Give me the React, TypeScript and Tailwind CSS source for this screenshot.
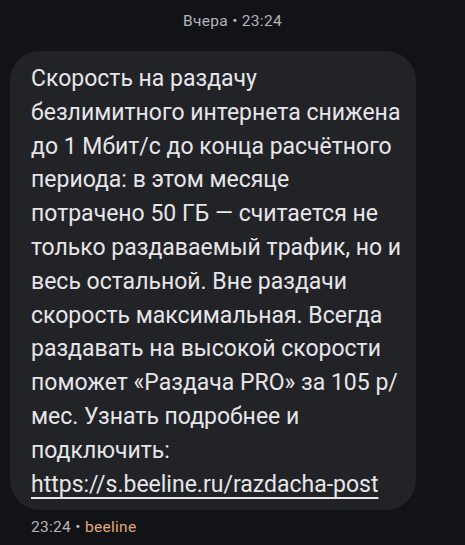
import React from 'react'

const lines = [
    'Скорость на раздачу',
    'безлимитного интернета снижена',
    'до 1 Мбит/с до конца расчётного',
    'периода: в этом месяце',
    'потрачено 50 ГБ — считается не',
    'только раздаваемый трафик, но и',
    'весь остальной. Вне раздачи',
    'скорость максимальная. Всегда',
    'раздавать на высокой скорости',
    'поможет «Раздача PRO» за 105 р/',
    'мес. Узнать подробнее и',
    'подключить:',
]

export default function App() {
    return (
        <div className="w-[465px] h-[545px] bg-[#121317] font-['Roboto',sans-serif] overflow-hidden">
            <div className="pt-[11px] pb-[20px] text-center text-[15.5px] tracking-[0.3px] leading-[20px] text-[#b4b5bc]">
                Вчера • 23:24
            </div>
            <div className="ml-[10px] w-[406px] rounded-[30px] bg-[#222327] pl-[21px] pr-[16px] pt-[11px] pb-[9px] text-[23px] leading-[33.8px] text-[#e6e6ea]">
                {lines.map((l, i) => (
                    <div key={i} className="whitespace-nowrap">{l}</div>
                ))}
                <div className="whitespace-nowrap underline decoration-[2px] underline-offset-[5px]">
                    https://s.beeline.ru/razdacha-post
                </div>
            </div>
            <div className="pl-[31px] pt-[7px] text-[15.5px] tracking-[0.3px] leading-[20px] text-[#b4b5bc]">
                23:24 • <span className="text-[#e3a878]">beeline</span>
            </div>
        </div>
    )
}
